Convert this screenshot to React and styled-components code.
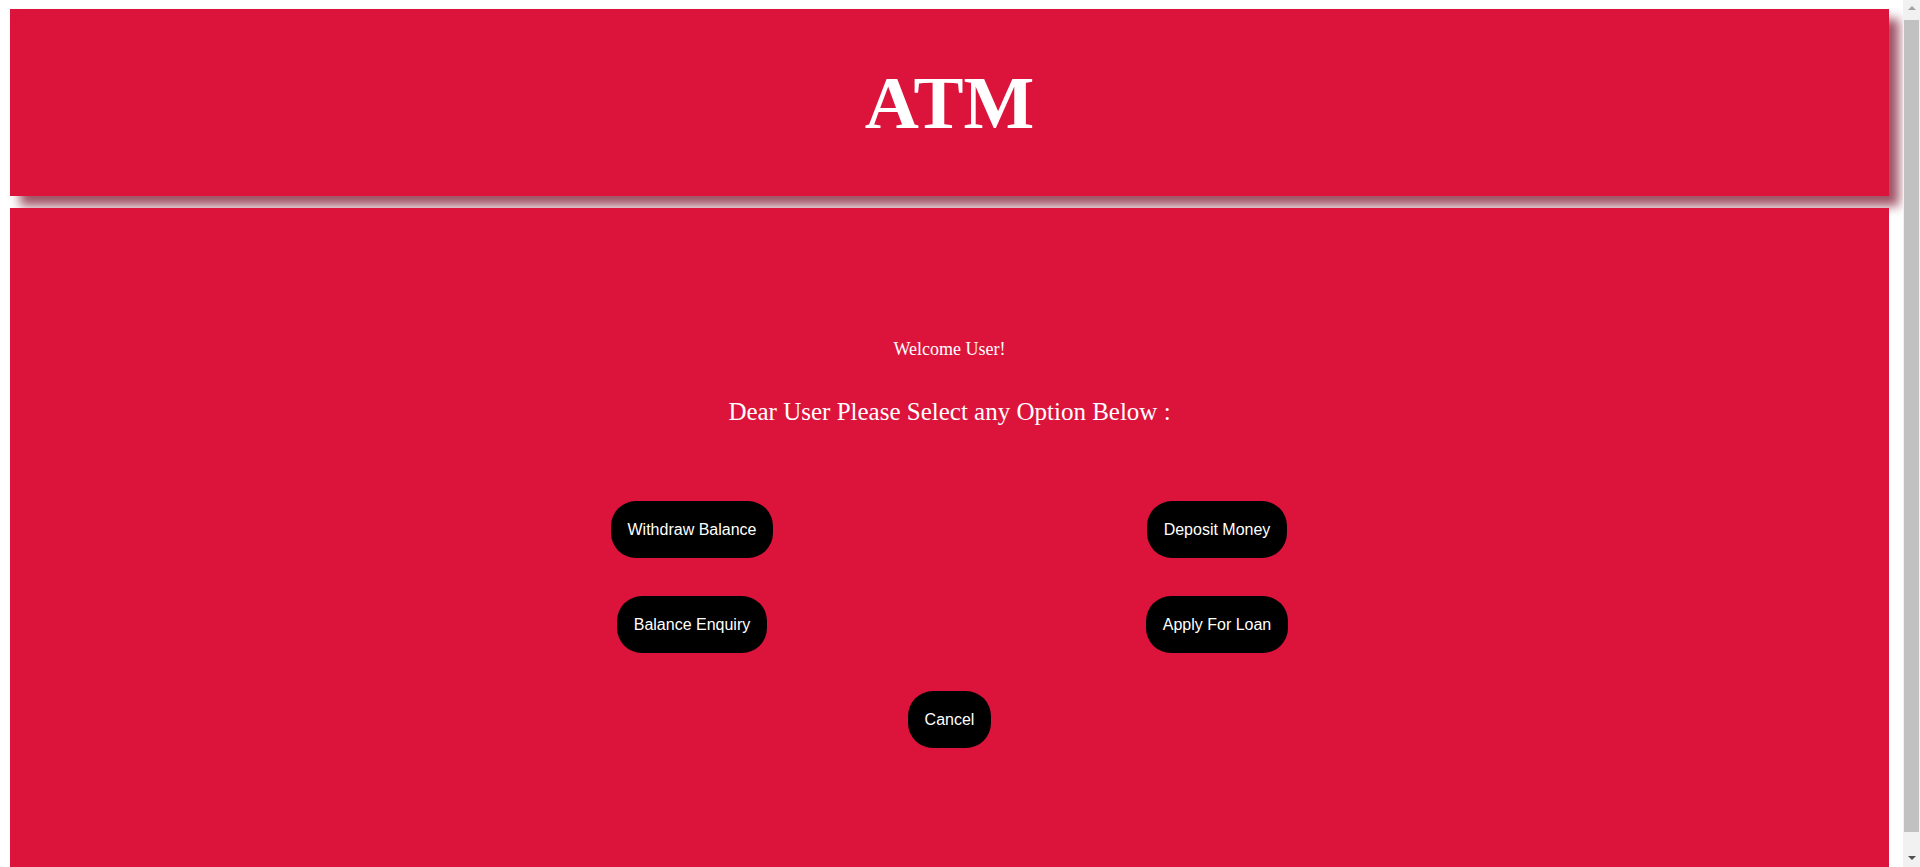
import React from "react";
import styled, { createGlobalStyle } from "styled-components";

const GlobalStyle = createGlobalStyle`
  body {
    margin: 8px;
    background: #ffffff;
    font-family: "Liberation Serif", "Times New Roman", serif;
  }
`;

const options = [
  "Withdraw Balance",
  "Deposit Money",
  "Balance Enquiry",
  "Apply For Loan",
];

const App = () => {
  return (
    <>
      <GlobalStyle />
      <Page>
        <Header>
          <Title>ATM</Title>
        </Header>
        <Screen>
          <Welcome>Welcome User!</Welcome>
          <Prompt>Dear User Please Select any Option Below :</Prompt>
          <OptionGrid>
            {options.map((label) => (
              <OptionButton key={label}>{label}</OptionButton>
            ))}
          </OptionGrid>
          <CancelRow>
            <OptionButton>Cancel</OptionButton>
          </CancelRow>
        </Screen>
      </Page>
      {/* window scrollbar as seen in the screenshot */}
      <ScrollTrack>
        <ArrowUp />
        <Thumb />
        <ArrowDown />
      </ScrollTrack>
    </>
  );
};

const Page = styled.div`
  width: 1879px;
  margin: 1px 0 0 2px;
  display: flex;
  flex-direction: column;
  gap: 12px;
`;

const Header = styled.header`
  height: 187px;
  background: #dc143c;
  display: flex;
  align-items: center;
  justify-content: center;
  box-shadow: 10px 10px 10px rgba(120, 10, 35, 0.7);
`;

const Title = styled.h1`
  margin: 0;
  font-size: 75px;
  font-weight: bold;
  color: #ffffff;
  font-family: "Liberation Serif", "Times New Roman", serif;
`;

const Screen = styled.main`
  min-height: 720px;
  background: #dc143c;
  padding-top: 131px;
  display: flex;
  flex-direction: column;
  align-items: center;
  color: #ffffff;
`;

const Welcome = styled.p`
  margin: 0;
  font-size: 18px;
`;

const Prompt = styled.p`
  margin: 38px 0 0;
  font-size: 25px;
`;

const OptionGrid = styled.div`
  margin-top: 75px;
  padding-left: 10px;
  display: grid;
  grid-template-columns: 525px 525px;
  row-gap: 38px;
  justify-items: center;
`;

const CancelRow = styled.div`
  margin-top: 38px;
  display: flex;
  justify-content: center;
`;

const OptionButton = styled.button`
  border: none;
  background: #000000;
  color: #ffffff;
  font-family: "Liberation Sans", Arial, sans-serif;
  font-size: 16px;
  line-height: 19px;
  padding: 19px 17px;
  border-radius: 25px;
  cursor: pointer;
`;

const ScrollTrack = styled.div`
  position: fixed;
  top: 0;
  right: 0;
  width: 17px;
  height: 100vh;
  background: #f1f1f1;
  display: flex;
  flex-direction: column;
  align-items: center;
`;

const ArrowUp = styled.div`
  margin-top: 6px;
  width: 0;
  height: 0;
  border-left: 4px solid transparent;
  border-right: 4px solid transparent;
  border-bottom: 4px solid #a3a3a3;
`;

const Thumb = styled.div`
  margin-top: 10px;
  width: 15px;
  flex: 1;
  background: #c1c1c1;
`;

const ArrowDown = styled.div`
  margin: 24px 0 7px;
  width: 0;
  height: 0;
  border-left: 4px solid transparent;
  border-right: 4px solid transparent;
  border-top: 4px solid #505050;
`;

export default App;
